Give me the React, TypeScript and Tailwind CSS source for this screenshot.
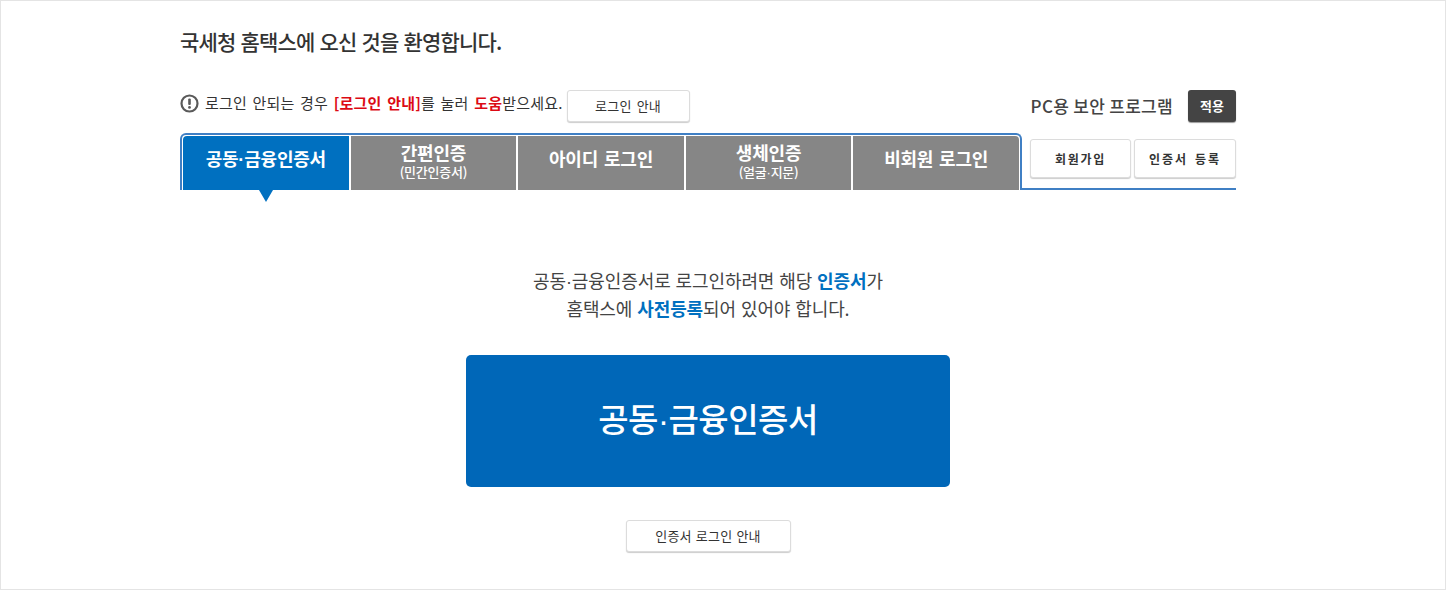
import React from 'react';

const FONT = "font-['Noto_Sans_CJK_KR','Noto_Sans',sans-serif]";

// the CJK middle dot is much wider than the one in the picture, so borrow a narrow one
const Dot = () => <span className="font-['Liberation_Sans'] leading-[0]">·</span>;

const tabs: { key: string; label: React.ReactNode; sub?: React.ReactNode; active?: boolean }[] = [
  { key: 'cert', label: <>공동<Dot />금융인증서</>, active: true },
  { key: 'simple', label: '간편인증', sub: '(민간인증서)' },
  { key: 'id', label: '아이디 로그인' },
  { key: 'bio', label: '생체인증', sub: <>(얼굴<Dot />지문)</> },
  { key: 'guest', label: '비회원 로그인' },
];

const AlertIcon = () => (
  <svg width="19" height="19" viewBox="0 0 19 19" className="mb-[6px] shrink-0">
    <circle cx="9.5" cy="9.5" r="8" fill="none" stroke="#5a5a5a" strokeWidth="2.2" />
    <rect x="8.2" y="4.4" width="2.6" height="6.6" rx="1.1" fill="#5a5a5a" />
    <circle cx="9.5" cy="13.4" r="1.4" fill="#5a5a5a" />
  </svg>
);

const LightButton = ({ className, children }: { className: string; children: React.ReactNode }) => (
  <button
    type="button"
    className={`flex items-center justify-center rounded-[3px] border border-[#dcdcdc] bg-white text-[#333] shadow-[0_1px_1px_rgba(0,0,0,0.2)] ${className}`}
  >
    {children}
  </button>
);

export default function App() {
  return (
    <div className={`${FONT} h-[590px] w-[1446px] overflow-hidden border border-[#e4e4e4] bg-white`}>
      <div className="ml-[179px] w-[1056px]">
        <h1 className="pt-[26px] text-[21px] leading-[28px] font-medium tracking-[-0.8px] text-[#333] [word-spacing:1px]">
          국세청 홈택스에 오신 것을 환영합니다.
        </h1>

        <div className="mt-[34px] flex h-[44px] items-start justify-between">
          <div className="flex items-center pt-px">
            <AlertIcon />
            <p className="ml-[6px] pb-[6px] text-[15px] leading-[26px] tracking-[0.2px] text-[#333] [word-spacing:2px]">
              로그인 안되는 경우{' '}
              <span className="font-bold text-[#dc0a14]">[로그인 안내]</span>를 눌러{' '}
              <span className="font-bold text-[#dc0a14]">도움</span>받으세요.
            </p>
            <LightButton className="ml-[4px] h-[32px] w-[123px] text-[13px] tracking-[0.2px] [word-spacing:2px]">
              로그인 안내
            </LightButton>
          </div>
          <div className="flex items-center pt-px">
            <span className="text-[17px] leading-[32px] font-medium tracking-[0.3px] text-[#444]">
              PC용 보안 프로그램
            </span>
            <button
              type="button"
              className="ml-[15px] flex h-[32px] w-[48px] items-center justify-center rounded-[3px] bg-[#444] text-[13px] font-bold text-white shadow-[0_1px_1px_rgba(0,0,0,0.4)]"
            >
              적용
            </button>
          </div>
        </div>

        <div className="flex h-[57px] items-stretch">
          <div className="flex w-[842px] shrink-0 gap-[2px] rounded-t-[6px] border-x-2 border-t-2 border-[#3f7fc4] pt-px pr-px pl-px">
            {tabs.map((tab) => (
              <div
                key={tab.key}
                className={`relative flex flex-1 flex-col items-center justify-center text-white last:rounded-tr-[4px] ${
                  tab.sub ? 'pb-[5px]' : 'pb-[10px]'
                } ${tab.active ? 'rounded-tl-[4px] bg-[#0070c0]' : 'bg-[#868686]'}`}
              >
                <span className="text-[18px] leading-[22px] font-bold tracking-[-0.2px] [word-spacing:2px]">{tab.label}</span>
                {tab.sub && (
                  <span className="mt-px text-[13px] leading-[16px] font-medium tracking-[-0.25px]">{tab.sub}</span>
                )}
                {tab.active && (
                  <span className="absolute top-full left-1/2 -ml-[7px] h-0 w-0 border-x-[7px] border-t-[12px] border-x-transparent border-t-[#0070c0]" />
                )}
              </div>
            ))}
          </div>
          <div className="flex flex-1 gap-[3px] border-b-2 border-[#3f7fc4] pt-[6px] pl-[8px]">
            <LightButton className="h-[39px] w-[101px] text-[12px] font-bold tracking-[1.7px]">회원가입</LightButton>
            <LightButton className="h-[39px] w-[102px] text-[12px] font-bold tracking-[2px] [word-spacing:2px]">
              인증서 등록
            </LightButton>
          </div>
        </div>

        <div className="flex flex-col items-center pt-[76px]">
          <p className="text-center text-[18px] leading-[28px] tracking-[-0.1px] text-[#444] [word-spacing:1px]">
            공동<Dot />금융인증서로 로그인하려면 해당 <strong className="font-bold text-[#0070c0]">인증서</strong>가
            <br />
            홈택스에 <strong className="font-bold text-[#0070c0]">사전등록</strong>되어 있어야 합니다.
          </p>
          <button
            type="button"
            className="mt-[33px] flex h-[132px] w-[484px] items-center justify-center rounded-[5px] bg-[#0067b8] pb-[4px] text-[33px] font-medium tracking-[-0.5px] text-white"
          >
            <span>공동<Dot />금융인증서</span>
          </button>
          <LightButton className="mt-[33px] h-[32px] w-[165px] text-[13px] tracking-[0.2px] [word-spacing:1px]">
            인증서 로그인 안내
          </LightButton>
        </div>
      </div>
    </div>
  );
}
